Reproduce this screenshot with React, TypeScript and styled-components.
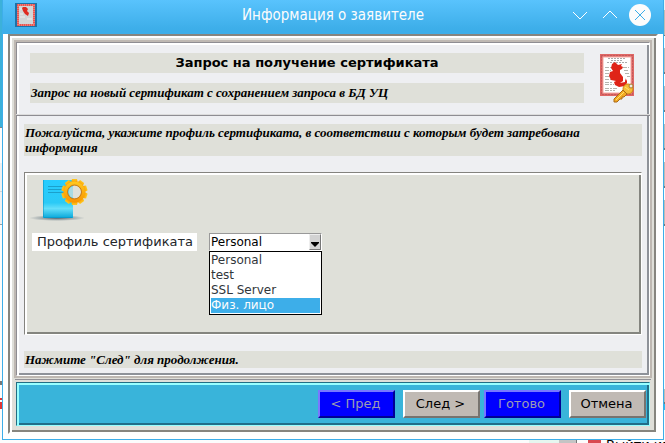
import React, { useState } from "react";
import styled, { createGlobalStyle } from "styled-components";

const GlobalStyle = createGlobalStyle`
  * { box-sizing: border-box; }
  body { margin: 0; background: #fcfcfc; color: #000; font: 13px/15px "DejaVu Sans", sans-serif; }
  h1, h2, p, ul { margin: 0; padding: 0; }
  button, select { margin: 0; font: inherit; }
`;

const Desktop = styled.div`
  display: grid;
  grid-template-columns: 2px minmax(0, 1fr) 1px;
  grid-template-rows: 1fr 3px;
  min-height: 100vh;
  overflow: hidden;
`;

const LeftEdge = styled.div`
  background: linear-gradient(#3cb1da 0 127px, #7d8387 127px 128px, #fcfcfc 128px 163px, #eff0f1 163px 191px, #d0d3d4 191px 192px, #eff0f1 192px 224px, #9a9fa2 224px 225px, #fcfcfc 225px 381px, #777 381px 385px, #fcfcfc 385px 398px, #e03535 398px 400px, #fcfcfc 400px 402px, #e03535 402px 409px, #fcfcfc 409px);
`;

const RightEdge = styled.div`
  background: linear-gradient(#eff0f1 0 10px, #c0bab4 10px 35px, #777 35px 36px, #fcfcfc 36px 48px, #c0bab4 48px 72px, #777 72px 74px, #fcfcfc 74px 86px, #c0bab4 86px 110px, #777 110px 112px, #fcfcfc 112px 124px, #c0bab4 124px 148px, #777 148px 150px, #fcfcfc 150px 162px, #c0bab4 162px 186px, #777 186px 188px, #fcfcfc 188px 200px, #c0bab4 200px 224px, #777 224px 226px, #fcfcfc 226px 389px, #c0bab4 389px 402px, #777 402px 404px, #2fbdf0 404px 410px, #fcfcfc 410px);
`;

const Behind = styled.div`
  grid-column: 1 / -1;
  display: flex;
  justify-content: flex-end;
  height: 3px;
  overflow: hidden;
`;
const MintStrip = styled.span`width: 30px; background: #e6f6ef;`;
const MenuStrip = styled.span`width: 18px; background: #c4c4c4; border-right: 1px solid #777;`;
const MenuIcon = styled.span`width: 13px; margin: 0 2px 0 11px; background: #d94950;`;
const MenuText = styled.span`width: 62px; padding-left: 3px; line-height: 9px; white-space: nowrap;`;

const Window = styled.main`
  display: flex;
  flex-direction: column;
  border: solid #3daee9;
  border-width: 0 1px 1px;
  background: #fff;
`;

const TitleBar = styled.header`
  display: grid;
  grid-template-columns: 90px 1fr 90px;
  align-items: center;
  height: 34px;
  padding: 0 12px 4px;
  background: linear-gradient(#59c3fd, #3daee9 85%);
  color: #fcfcfc;
`;
const WindowTitle = styled.h1`
  font: 400 15px/20px "DejaVu Sans Condensed", "Noto Sans", sans-serif;
  text-align: center;
  white-space: nowrap;
`;
const WindowButtons = styled.div`
  display: flex;
  justify-content: flex-end;
  gap: 8px;
`;
const WindowButton = styled.button`
  display: block;
  width: 22px;
  height: 22px;
  padding: 0;
  border: 0;
  background: none;
`;

const Frame = styled.div`
  flex: 1;
  display: flex;
  flex-direction: column;
  margin: 0 5px 5px;
  padding: 4px;
  border: 2px solid;
  border-color: #86857f #fff #fff #86857f;
  background: #dfdfd9;
  box-shadow: inset 2px 2px #fff, inset -2px -2px #86857f;
`;
const PageRim = styled.div`
  flex: 1;
  display: flex;
  border: 2px solid #beb8b2;
`;
const Page = styled.section`
  flex: 1;
  min-width: 0;
  border: 1px solid;
  border-color: #8e8d92 #fff #fff #8e8d92;
  background: #eeeff2;
  box-shadow: inset 2px 2px #fff, inset -2px -2px #8e9299;
`;
const PageHeader = styled.div`
  display: flex;
  gap: 16px;
  padding: 10px 12px 11px 13px;
`;
const Headings = styled.div`
  flex: 1;
  display: grid;
  gap: 10px;
`;
const Heading = styled.h2`
  background: #dfe0d9;
  font: 700 13px/20px "DejaVu Sans", sans-serif;
  text-align: center;
`;
const Divider = styled.div`
  height: 2px;
  margin: 0 -1px;
  border-top: 1px solid #dcdcdc;
  background: #8e8d92;
`;
const Note = styled.p`
  padding: 1px;
  background: #dfe0d9;
  font: italic 700 13px/15px "Liberation Serif", serif;
`;
const Subheading = styled(Note)`
  line-height: 18px;
`;
const Body = styled.div`
  display: grid;
  gap: 16px;
  padding: 8px 7px 7px;
`;
const Panel = styled.div`
  min-height: 163px;
  padding: 6px 7px 10px;
  border: 1px solid;
  border-color: #84837f #fff #fff #84837f;
  background: #dfe0d9;
  box-shadow: inset 2px 2px #fff, inset -2px -2px #84857f;
`;
const PanelIcon = styled.svg`
  display: block;
  width: 60px;
  height: 44px;
  margin: 0 0 10px -4px;
`;
const Field = styled.div`
  display: flex;
  gap: 12px;
`;
const FieldLabel = styled.label`
  padding: 0 4px 0 5px;
  background: #fff;
  color: #232629;
  line-height: 17px;
`;
const Combo = styled.div`
  position: relative;
  width: 113px;
  height: 18px;
  border: 1px solid;
  border-color: #999 #fff #fff #999;
  background: #fff;
  font-size: 12px;
`;
const Select = styled.select`
  display: block;
  width: 100%;
  height: 16px;
  padding: 0 14px 0 1px;
  border: 0;
  outline: 0;
  appearance: none;
  background: transparent;
  color: #000;
  line-height: 16px;
`;
const Arrow = styled.span`
  position: absolute;
  top: 0;
  right: 0;
  display: grid;
  place-items: end center;
  width: 12px;
  height: 16px;
  padding-bottom: 2px;
  border: 1px solid;
  border-color: #eee #777 #777 #eee;
  background: #d2d2d2;
  pointer-events: none;
`;
const Options = styled.ul`
  position: absolute;
  top: 17px;
  left: -1px;
  z-index: 1;
  width: 113px;
  padding: 1px;
  border: 1px solid #000;
  background: #fff;
  list-style: none;
`;
const Option = styled.li<{ $active: boolean }>`
  height: 15px;
  color: ${(p) => (p.$active ? "#fcfcfc" : "#31363b")};
  background: ${(p) => (p.$active ? "#3daee9" : "transparent")};
`;
const Seam = styled.div`
  height: 1px;
  margin: 1px 1px 2px;
  background: #929197;
`;
const Footer = styled.footer`
  display: flex;
  justify-content: flex-end;
  gap: 4px;
  margin: 0 2px 2px;
  padding: 7px 3px 7px 7px;
  border: 1px solid;
  border-color: #216e84 #98ffff #98ffff #216e84;
  background: #39b4da;
  box-shadow: inset 2px 2px #98ffff, inset -2px -2px #216e88;
`;
const ButtonPair = styled.div`
  display: flex;
  gap: 8px;
`;
const WizardButton = styled.button`
  width: 77px;
  height: 28px;
  padding: 0 2px 2px 0;
  border: 2px solid;
  border-color: #fff #77736f #77736f #fff;
  background: #c0bab4;
  color: #000;
  white-space: nowrap;
  &:disabled {
    border-color: #7878ff #000094 #000094 #7878ff;
    background: #00f;
    color: #9b9bb2;
  }
`;

function WindowIcon() {
  return (
    <svg width="22" height="24" viewBox="0 0 22 24" aria-hidden="true">
      <rect width="22" height="24" fill="#1d72a8" />
      <rect x="2" y="1" width="18" height="22" fill="#e9544f" />
      <rect x="3" y="2" width="16" height="20" fill="none" stroke="#f3a5a1" strokeDasharray="1 1" />
      <rect x="4" y="3" width="14" height="18" fill="#d2d5d6" />
      <path d="M8 4l3 0 2 2-1 2 2 2-1 3-3-2-2-3-1-3z" fill="#df2a20" />
      <path d="M5 6h2M5 11h3M5 14h5M12 16h5" stroke="#eee" />
    </svg>
  );
}

function CertificateIcon() {
  return (
    <svg width="37" height="50" viewBox="0 0 37 50" aria-hidden="true">
      <rect x="0" y="1" width="34" height="42" fill="#df6663" />
      <rect x="1.500" y="2.500" width="31" height="39" fill="none" stroke="#a94d58" strokeDasharray="1 2" />
      <rect x="3" y="4" width="28" height="36" fill="#fff" stroke="#f4a7a2" />
      <path d="M8 5.500h17M11 7.500h12M7 9.500h21" stroke="#aaa" strokeDasharray="2 1" />
      <path d="M5 14.500h8M5 17.500h6M23 14.500h6M24 17.500h5M5 20.500h6M5 23.500h6M5 26.500h7M5 29.500h7M5 31.500h9M5 35.500h12M5 37.500h10M25 20.500h4M27 23.500h3" stroke="#b3b5af" strokeDasharray="4 1 2 1" />
      <path d="M16 10l2 2 4-1-1 2 2 1-1 2-2 1v3l3 4v4l-3 2 5-1v-4l1 3 1-2 0 4-2 3-6 1-4-2-1-3 2-1-5-1-2-4 1-4 3-1-2-3 1-4 3-2z" fill="#df2418" />
      <circle cx="28" cy="36" r="5" fill="#f6bd38" stroke="#d08714" />
      <circle cx="31" cy="33" r="2" fill="#eceae5" stroke="#ac7c27" />
      <path d="M23 37l4 4-3 3h-2v2h-2l-3 3h-3v-3z" fill="#f3aa23" stroke="#a96818" />
      <path d="M24 39l-8 8M25 34l4 3" stroke="#ffe36d" />
    </svg>
  );
}

function ProfileIcon() {
  const teeth = Array.from({ length: 10 }, (_, i) => i * 36);
  return (
    <PanelIcon viewBox="0 0 60 44" aria-hidden="true">
      <defs>
        <linearGradient id="paper" x1="0" y1="0" x2="0" y2="1">
          <stop offset="0" stopColor="#27ccff" />
          <stop offset=".6" stopColor="#2bcaf6" />
          <stop offset=".75" stopColor="#64dffa" />
          <stop offset="1" stopColor="#08a7da" />
        </linearGradient>
        <radialGradient id="shade">
          <stop offset="0" stopColor="#4f6370" />
          <stop offset=".5" stopColor="#9ba5a8" />
          <stop offset="1" stopColor="#dfe0d9" />
        </radialGradient>
        <linearGradient id="gear" x1="0" y1="0" x2="0" y2="1">
          <stop stopColor="#ffc91f" />
          <stop offset="1" stopColor="#f99300" />
        </linearGradient>
      </defs>
      <ellipse cx="29" cy="39" rx="28" ry="3" fill="url(#shade)" />
      <path d="M15 1h30v38H15z" fill="url(#paper)" />
      <path d="M15.500 1v37M16 38.500h28" stroke="#078dbd" opacity=".5" />
      <path d="M20 7.500h16M20 10.500h15M20 13.500h16" stroke="#168eb8" opacity=".7" />
      <g fill="url(#gear)">
        {teeth.map((a) => (
          <path key={a} d="M43 4l1-4h5l1 4z" transform={`rotate(${a} 46.500 13)`} />
        ))}
        <path fillRule="evenodd" d="M36 13a10.500 10.500 0 1 0 21 0a10.500 10.500 0 1 0-21 0zM40 13a6.500 6.500 0 1 1 13 0a6.500 6.500 0 1 1-13 0z" />
      </g>
      <circle cx="46.500" cy="13" r="7" fill="none" stroke="#c47b25" />
      <circle cx="46.500" cy="13" r="6" fill="#dfe0d9" opacity=".7" />
    </PanelIcon>
  );
}

const profiles = ["Personal", "test", "SSL Server", "Физ. лицо"];

export default function App() {
  const [profile, setProfile] = useState("Personal");
  const [active, setActive] = useState("Физ. лицо");
  const [open, setOpen] = useState(true);

  return (
    <Desktop>
      <GlobalStyle />
      <LeftEdge />
      <Window>
        <TitleBar>
          <WindowIcon />
          <WindowTitle>Информация о заявителе</WindowTitle>
          <WindowButtons>
            <WindowButton aria-label="Свернуть">
              <svg width="22" height="22" fill="none" stroke="#fff"><path d="M4 8l7 7 7-7" /></svg>
            </WindowButton>
            <WindowButton aria-label="Развернуть">
              <svg width="22" height="22" fill="none" stroke="#fff"><path d="M4 14l7-7 7 7" /></svg>
            </WindowButton>
            <WindowButton aria-label="Закрыть">
              <svg width="22" height="22" fill="none" stroke="#3daee9"><circle cx="11" cy="11" r="11" fill="#fcfcfc" stroke="none" /><path d="M6 6l10 10M16 6L6 16" /></svg>
            </WindowButton>
          </WindowButtons>
        </TitleBar>
        <Frame>
          <PageRim>
            <Page>
              <PageHeader>
                <Headings>
                  <Heading>Запрос на получение сертификата</Heading>
                  <Subheading>Запрос на новый сертификат с сохранением запроса в БД УЦ</Subheading>
                </Headings>
                <CertificateIcon />
              </PageHeader>
              <Divider />
              <Body>
                <Note>Пожалуйста, укажите профиль сертификата, в соответствии с которым будет затребована информация</Note>
                <Panel>
                  <ProfileIcon />
                  <Field>
                    <FieldLabel htmlFor="profile">Профиль сертификата</FieldLabel>
                    <Combo>
                      <Select
                        id="profile"
                        value={profile}
                        onChange={(e) => setProfile(e.target.value)}
                        onMouseDown={(e) => {
                          e.preventDefault();
                          setOpen(!open);
                        }}
                      >
                        {profiles.map((name) => <option key={name}>{name}</option>)}
                      </Select>
                      <Arrow>
                        <svg width="8" height="5" aria-hidden="true"><path d="M0 0h8v1L4 5 0 1z" /></svg>
                      </Arrow>
                      {open && (
                        <Options role="listbox" aria-label="Профиль сертификата">
                          {profiles.map((name) => (
                            <Option
                              key={name}
                              role="option"
                              aria-selected={name === active}
                              $active={name === active}
                              onMouseEnter={() => setActive(name)}
                              onClick={() => {
                                setProfile(name);
                                setOpen(false);
                              }}
                            >
                              {name}
                            </Option>
                          ))}
                        </Options>
                      )}
                    </Combo>
                  </Field>
                </Panel>
                <Note>Нажмите "След" для продолжения.</Note>
              </Body>
            </Page>
          </PageRim>
          <Seam />
          <Footer>
            <ButtonPair>
              <WizardButton disabled>&lt; Пред</WizardButton>
              <WizardButton>След &gt;</WizardButton>
            </ButtonPair>
            <ButtonPair>
              <WizardButton disabled>Готово</WizardButton>
              <WizardButton>Отмена</WizardButton>
            </ButtonPair>
          </Footer>
        </Frame>
      </Window>
      <RightEdge />
      <Behind>
        <MintStrip />
        <MenuStrip />
        <MenuIcon />
        <MenuText>Выйти из</MenuText>
      </Behind>
    </Desktop>
  );
}
